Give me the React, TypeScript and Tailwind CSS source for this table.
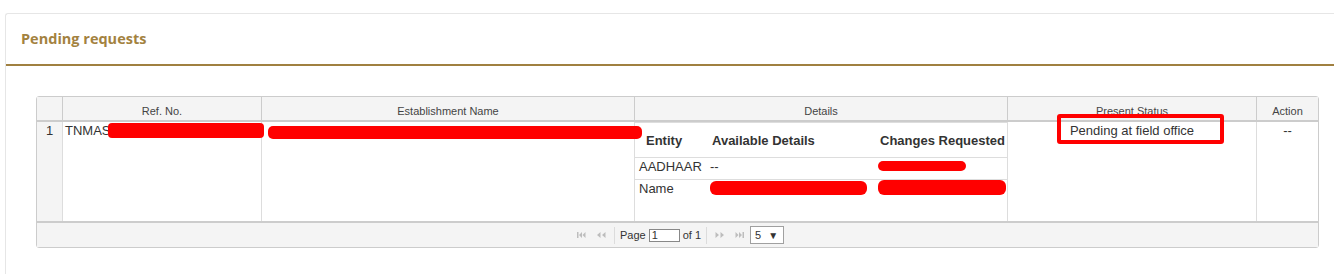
import React from "react";

const G = "#bdbdbd";

function IconFirst() {
  return (
    <svg width="9" height="6" viewBox="0 0 9 6">
      <rect x="0" y="0" width="1.5" height="6" fill={G} />
      <path d="M5 0 L2 3 L5 6Z M8.5 0 L5.5 3 L8.5 6Z" fill={G} />
    </svg>
  );
}
function IconPrev() {
  return (
    <svg width="10" height="6" viewBox="0 0 10 6">
      <path d="M4.5 0 L1 3 L4.5 6Z M9.5 0 L6 3 L9.5 6Z" fill={G} />
    </svg>
  );
}
function IconNext() {
  return (
    <svg width="10" height="6" viewBox="0 0 10 6">
      <path d="M0.5 0 L4 3 L0.5 6Z M5.5 0 L9 3 L5.5 6Z" fill={G} />
    </svg>
  );
}
function IconLast() {
  return (
    <svg width="9" height="6" viewBox="0 0 9 6">
      <path d="M0.5 0 L3.5 3 L0.5 6Z M4 0 L7 3 L4 6Z" fill={G} />
      <rect x="7.5" y="0" width="1.5" height="6" fill={G} />
    </svg>
  );
}

export default function App() {
  return (
    <div className="w-[1334px] h-[274px] overflow-hidden bg-white pt-[13px] pl-[5px] font-['Liberation_Sans',Arial,sans-serif] text-[#333]">
      <div className="w-[1345px] h-[300px] border-l border-t border-[#e6e6e6] rounded-tl-[3px]">
        <div className="h-[52px] border-b-2 border-[#a08040] pl-[15px] flex items-center">
          <span className="font-['Open_Sans',sans-serif] font-bold text-[14.5px] text-[#a3823f]">
            Pending requests
          </span>
        </div>
        <div className="pt-[30px] pl-[30px]">
          <div className="w-[1283px] border border-[#cccccc] rounded-[3px] bg-white">
            {/* header */}
            <div className="flex h-[25px] bg-[#f4f4f4] border-b-2 border-[#cccccc] text-[11px] leading-[13px] text-[#444]">
              <div className="w-[26px] border-r border-[#cccccc]" />
              <div className="w-[199px] border-r border-[#cccccc] text-center pt-[8px]">Ref. No.</div>
              <div className="w-[373px] border-r border-[#cccccc] text-center pt-[8px]">Establishment Name</div>
              <div className="w-[373px] border-r border-[#cccccc] text-center pt-[8px]">Details</div>
              <div className="w-[249px] border-r border-[#cccccc] text-center pt-[8px]">Present Status</div>
              <div className="w-[61px] text-center pt-[8px]">Action</div>
            </div>
            {/* data row */}
            <div className="flex h-[99px] text-[13px] leading-[15px]">
              <div className="w-[26px] bg-[#f4f4f4] border-r border-[#dddddd] text-center pt-[1px]">1</div>
              <div className="relative w-[199px] border-r border-[#dddddd] pl-[2px] pt-[1px]">
                TNMAS
                <div className="absolute left-[45px] top-[1px] w-[156px] h-[15px] bg-[#ff0000] rounded-[4px]" />
              </div>
              <div className="relative w-[373px] border-r border-[#dddddd]">
                <div className="absolute left-[6px] top-[4px] w-[374px] h-[13px] bg-[#ff0000] rounded-[5px]" />
              </div>
              <div className="w-[373px] border-r border-[#dddddd]">
                <div className="border-t border-[#dddddd]">
                  <div className="grid grid-cols-[72px_167px_1fr] h-[35px] border-b border-[#dddddd] items-center font-bold">
                    <div className="pl-[11px]">Entity</div>
                    <div className="pl-[5px]">Available Details</div>
                    <div className="pl-[6px]">Changes Requested</div>
                  </div>
                  <div className="grid grid-cols-[72px_167px_1fr] h-[22px] border-b border-[#dddddd]">
                    <div className="pl-[4px] pt-[1px]">AADHAAR</div>
                    <div className="pl-[3px] pt-[1px]">--</div>
                    <div className="relative">
                      <div className="absolute left-[4px] top-[3px] w-[88px] h-[10px] bg-[#ff0000] rounded-[5px]" />
                    </div>
                  </div>
                  <div className="grid grid-cols-[72px_167px_1fr] h-[20px]">
                    <div className="pl-[4px] pt-[1px]">Name</div>
                    <div className="relative">
                      <div className="absolute left-[3px] top-[1px] w-[157px] h-[14px] bg-[#ff0000] rounded-[6px]" />
                    </div>
                    <div className="relative">
                      <div className="absolute left-[4px] top-[0px] w-[128px] h-[15px] bg-[#ff0000] rounded-[6px]" />
                    </div>
                  </div>
                </div>
              </div>
              <div className="relative w-[249px] border-r border-[#dddddd] text-center pt-[1px]">
                Pending at field office
                <div className="absolute left-[49px] top-[-8px] w-[167px] h-[30px] border-4 border-[#ff0000] rounded-[3px]" />
              </div>
              <div className="w-[61px] text-center pt-[1px]">--</div>
            </div>
            {/* pager */}
            <div className="h-[26px] bg-[#f4f4f4] border-t-2 border-[#cccccc] flex items-center justify-center pl-[6px] text-[11px] text-[#333]">
              <div className="flex items-center gap-[10px]">
                <IconFirst />
                <IconPrev />
              </div>
              <div className="w-px h-[17px] bg-[#dcdcdc] ml-[8px] mr-[5px]" />
              <span>Page</span>
              <div className="ml-[3px] w-[31px] h-[13px] bg-white border border-[#888] text-[11px] leading-[11px] pl-[2px]">1</div>
              <span className="ml-[3px]">of 1</span>
              <div className="w-px h-[17px] bg-[#dcdcdc] ml-[5px] mr-[8px]" />
              <div className="flex items-center gap-[10px]">
                <IconNext />
                <IconLast />
              </div>
              <div className="ml-[6px] w-[34px] h-[18px] bg-white border border-[#a0a0a0] flex items-center pl-[4px] gap-[7px] text-[11px]">
                <span>5</span>
                <span className="text-[10px]">▼</span>
              </div>
            </div>
          </div>
        </div>
      </div>
    </div>
  );
}
